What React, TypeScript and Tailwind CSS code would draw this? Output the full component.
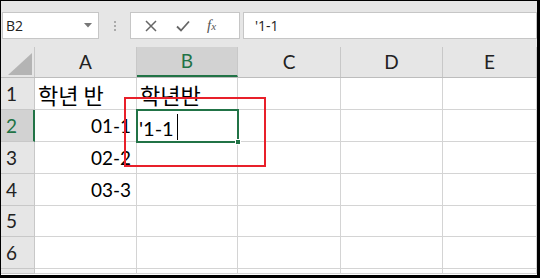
import React from "react";

const cols = ["A", "B", "C", "D", "E"];
const colW = [102, 101, 103, 102, 94];
const rowH = [32, 32, 32, 32, 31, 32, 5];

const data: Record<string, string> = {
  "1A": "학년 반",
  "1B": "학년반",
  "2A": "01-1",
  "3A": "02-2",
  "4A": "03-3",
};

export default function App() {
  return (
    <div className="w-[540px] h-[278px] overflow-hidden bg-black">
      <div className="relative ml-[1px] mt-[1px] w-[536px] h-[274px] bg-white overflow-hidden" style={{ fontFamily: "Lato, 'Noto Sans CJK KR', sans-serif" }}>
        {/* toolbar */}
        <div className="h-[46px] bg-[#e6e6e6] flex items-start pt-[11px]">
          <div className="ml-[1px] w-[97px] h-[27px] bg-white border border-[#c6c6c6] flex items-center justify-between pl-[3px] pr-[6px]">
            <span className="text-[14px] text-[#222]" style={{ fontFamily: "'Open Sans', sans-serif" }}>B2</span>
            <svg width="8" height="5" viewBox="0 0 8 5"><path d="M0 0 L8 0 L4 4.5 Z" fill="#777" /></svg>
          </div>
          <div className="w-[31px] h-[27px] flex flex-col items-center justify-center gap-[2px]">
            <div className="w-[2px] h-[2px] bg-[#aaa]" />
            <div className="w-[2px] h-[2px] bg-[#aaa]" />
            <div className="w-[2px] h-[2px] bg-[#aaa]" />
          </div>
          <div className="w-[110px] h-[27px] bg-white border border-[#c6c6c6] flex items-center">
            <svg className="ml-[14px]" width="12" height="12" viewBox="0 0 12 12"><path d="M1 1 L11 11 M11 1 L1 11" stroke="#666" strokeWidth="1.5" /></svg>
            <svg className="ml-[19px]" width="14" height="12" viewBox="0 0 14 12"><path d="M1 6.5 L5 10.5 L13 1.5" stroke="#666" strokeWidth="1.8" fill="none" /></svg>
            <span className="ml-[17px] text-[15px] italic text-[#555] leading-none" style={{ fontFamily: "'Liberation Serif', serif" }}>f<span className="text-[11px]">x</span></span>
          </div>
          <div className="ml-[3px] flex-1 h-[27px] bg-white border border-[#c6c6c6] flex items-center pl-[11px]">
            <span className="text-[14px] text-[#222]" style={{ fontFamily: "'Open Sans', sans-serif" }}>'1-1</span>
          </div>
        </div>
        {/* header row */}
        <div className="flex h-[31px] bg-[#e6e6e6] border-b border-[#bdbdbd]">
          <div className="w-[34px] border-r border-[#c8c8c8] flex items-end justify-end pr-[2px] pb-[2px]">
            <svg width="24" height="22" viewBox="0 0 24 22"><path d="M24 0 L24 22 L0 22 Z" fill="#b4b4b4" /></svg>
          </div>
          {cols.map((c, i) => (
            <div
              key={c}
              className={
                c === "B"
                  ? "flex items-center justify-center text-[19px] bg-[#d2d2d2] text-[#217346] border-r border-[#c8c8c8] border-b-2 border-b-[#217346]"
                  : "flex items-center justify-center text-[19px] text-[#222] border-r border-[#c8c8c8]"
              }
              style={{ width: colW[i] }}
            >
              {c}
            </div>
          ))}
        </div>
        {/* body */}
        {rowH.map((h, r) => {
          const rn = r + 1;
          return (
            <div key={rn} className="flex" style={{ height: h }}>
              <div
                className={
                  rn === 2
                    ? "w-[34px] bg-[#d2d2d2] text-[#217346] border-r-2 border-[#217346] border-b border-b-[#c8c8c8] text-[19px] flex items-end pl-[5px] pb-[1px]"
                    : "w-[34px] bg-[#e6e6e6] text-[#222] border-r border-[#c8c8c8] border-b border-b-[#c8c8c8] text-[19px] flex items-end pl-[5px] pb-[1px]"
                }
              >
                {rn <= 6 ? rn : ""}
              </div>
              {cols.map((c, i) => {
                const v = data[`${rn}${c}`];
                const kr = v && /[가-힣]/.test(v);
                return (
                  <div
                    key={c}
                    className={
                      c === "A" && !kr
                        ? "border-r border-b border-[#d4d4d4] text-[19px] text-black flex items-end justify-end pr-[5px] pb-[1px] whitespace-nowrap"
                        : "border-r border-b border-[#d4d4d4] text-[22px] text-black flex items-end pl-[3px] pb-[0px] whitespace-nowrap"
                    }
                    style={{ width: colW[i], fontFamily: kr ? "'Noto Sans CJK KR', sans-serif" : undefined, lineHeight: kr ? "30px" : undefined }}
                  >
                    {v}
                  </div>
                );
              })}
            </div>
          );
        })}
        {/* selected cell */}
        <div className="absolute left-[135px] top-[108px] w-[103px] h-[34px] border-2 border-[#217346] flex items-end pl-[1px] pb-[1px]">
          <span className="text-[20px] text-black leading-none mb-[2px]">'1-1</span>
          <span className="w-[1px] h-[26px] bg-black ml-[3px]" />
          <div className="absolute right-[-4px] bottom-[-4px] w-[6px] h-[6px] bg-[#217346] border border-white" />
        </div>
        {/* red highlight */}
        <div className="absolute left-[123px] top-[96px] w-[142px] h-[70px] border-2 border-[#e8202a]" />
      </div>
    </div>
  );
}
